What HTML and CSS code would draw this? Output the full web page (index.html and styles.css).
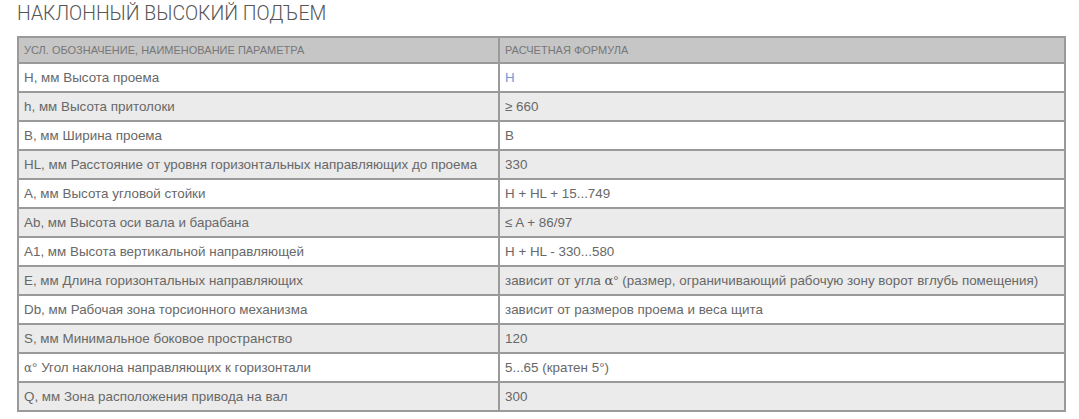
FILE: index.html
```html
<!DOCTYPE html>
<html lang="ru">
<head>
<meta charset="utf-8">
<link rel="stylesheet" href="styles.css">
</head>
<body>
<div class="page">
  <h1 class="title">НАКЛОННЫЙ ВЫСОКИЙ ПОДЪЕМ</h1>
  <table class="spec">
    <thead>
      <tr><th class="c1">УСЛ. ОБОЗНАЧЕНИЕ, НАИМЕНОВАНИЕ ПАРАМЕТРА</th><th>РАСЧЕТНАЯ ФОРМУЛА</th></tr>
    </thead>
    <tbody>
      <tr><td>H, мм Высота проема</td><td class="blue">H</td></tr>
      <tr><td>h, мм Высота притолоки</td><td>≥ 660</td></tr>
      <tr><td>B, мм Ширина проема</td><td>B</td></tr>
      <tr><td>HL, мм Расстояние от уровня горизонтальных направляющих до проема</td><td>330</td></tr>
      <tr><td>A, мм Высота угловой стойки</td><td>H + HL + 15...749</td></tr>
      <tr><td>Ab, мм Высота оси вала и барабана</td><td>≤ A + 86/97</td></tr>
      <tr><td>A1, мм Высота вертикальной направляющей</td><td>H + HL - 330...580</td></tr>
      <tr><td>E, мм Длина горизонтальных направляющих</td><td>зависит от угла <span class="alpha">α</span>° (размер, ограничивающий рабочую зону ворот вглубь помещения)</td></tr>
      <tr><td>Db, мм Рабочая зона торсионного механизма</td><td>зависит от размеров проема и веса щита</td></tr>
      <tr><td>S, мм Минимальное боковое пространство</td><td>120</td></tr>
      <tr><td><span class="alpha-s">α</span>° Угол наклона направляющих к горизонтали</td><td>5...65 (кратен 5°)</td></tr>
      <tr><td>Q, мм Зона расположения привода на вал</td><td>300</td></tr>
    </tbody>
  </table>
</div>
</body>
</html>
```

FILE: styles.css
```css
html, body {
  margin: 0;
  padding: 0;
  background: #ffffff;
}
body {
  font-family: "Liberation Sans", Arial, sans-serif;
  color: #666666;
}
.page {
  padding: 0 14px 0 17px;
}
.title {
  margin: 0;
  padding-top: 3px;
  height: 33px;
  font-family: "Roboto", "Liberation Sans", sans-serif;
  font-weight: 300;
  font-size: 19.4px;
  line-height: 22px;
  color: #555555;
}
.spec {
  width: 1049px;
  border-collapse: collapse;
  font-size: 13.4px;
}
.spec th, .spec td {
  border: 2px solid #9a9a9a;
  text-align: left;
  vertical-align: middle;
  padding: 0 0 0 5px;
  white-space: nowrap;
}
.spec th {
  background: #c6c6c6;
  font-weight: normal;
  font-size: 11px;
  color: #777777;
  height: 24px;
}
.spec th.c1 {
  width: 474px;
}
.spec td {
  height: 27px;
  color: #686868;
}
.spec tbody tr:nth-child(even) td {
  background: #ebebeb;
}
.spec td.blue {
  color: #6b9bd6;
}
.alpha {
  font-family: "DejaVu Serif", serif;
  font-size: 13px;
  color: #555555;
}
.alpha-s {
  font-family: "DejaVu Serif", serif;
  font-size: 12px;
}
```
